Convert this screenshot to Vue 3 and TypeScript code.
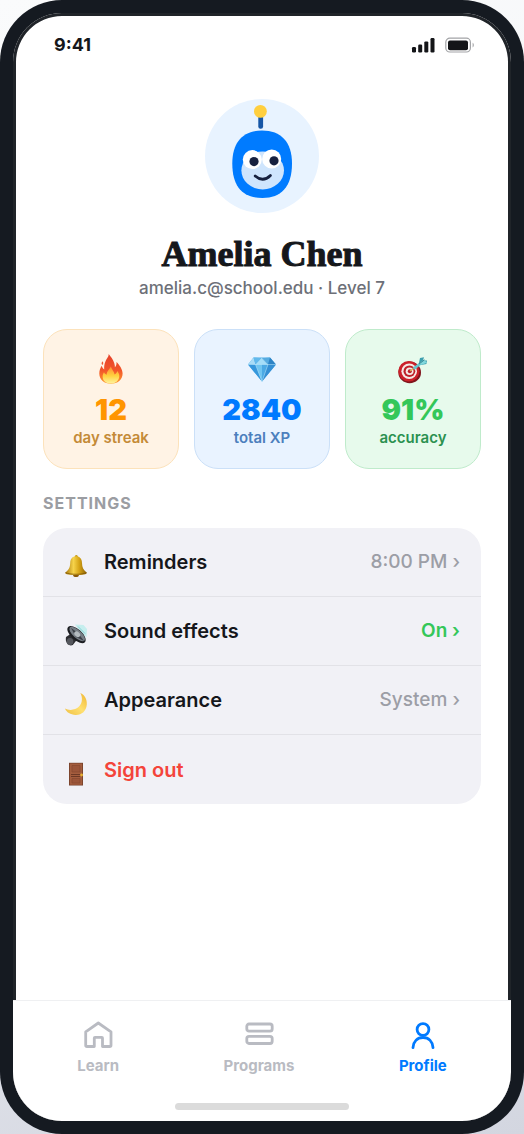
<script setup lang="ts">
import { ref } from 'vue'

interface Stat { id: string; value: string; label: string }
interface Setting { id: string; label: string; value?: string }
interface Tab { id: string; label: string }

const stats: Stat[] = [
  { id: 'streak', value: '12', label: 'day streak' },
  { id: 'xp', value: '2840', label: 'total XP' },
  { id: 'accuracy', value: '91%', label: 'accuracy' },
]

const settings: Setting[] = [
  { id: 'reminders', label: 'Reminders', value: '8:00 PM' },
  { id: 'sound', label: 'Sound effects', value: 'On' },
  { id: 'appearance', label: 'Appearance', value: 'System' },
  { id: 'signout', label: 'Sign out' },
]

const tabs: Tab[] = [
  { id: 'learn', label: 'Learn' },
  { id: 'programs', label: 'Programs' },
  { id: 'profile', label: 'Profile' },
]

const activeTab = ref('profile')
</script>

<template>
  <div class="phone">
    <div class="screen">
      <header class="status">
        <span class="time">9:41</span>
        <svg class="status-icons" viewBox="0 0 64 16" aria-hidden="true">
          <g fill="#141518">
            <rect x="1" y="10" width="4" height="5.4" rx="1.2" />
            <rect x="7.2" y="7.6" width="4" height="7.8" rx="1.2" />
            <rect x="13.3" y="4.4" width="4" height="11" rx="1.2" />
            <rect x="19.5" y="1" width="4" height="14.4" rx="1.2" />
            <rect x="37" y="3.4" width="20" height="9.8" rx="2" />
          </g>
          <rect x="34.8" y="1.2" width="24.6" height="13.8" rx="4" fill="none" stroke="#a3a4a7" stroke-width="1.2" />
          <path d="M61.6 5.8c1.6.6 1.6 4 0 4.6z" fill="#a3a4a7" />
        </svg>
      </header>

      <main class="content">
        <svg class="avatar" viewBox="0 0 114 114" role="img" aria-label="Avatar">
          <circle cx="57" cy="57" r="57" fill="#e8f3ff" />
          <rect x="53.3" y="15" width="4.8" height="14.8" rx="2.2" fill="#1656a6" />
          <circle cx="55.4" cy="12.4" r="6.4" fill="#ffcf3f" />
          <path d="M57 31.6C76 31.6 87 43 87 64.500C87 88 76 99 57.500 99C38 99 27.300 88 27.300 64.500C27.300 43 38 31.600 57 31.600z" fill="#007bff" />
          <ellipse cx="57.700" cy="71.500" rx="21.300" ry="18.900" fill="#cfe5fd" />
          <circle cx="47.300" cy="60.600" r="9.500" fill="#fff" />
          <circle cx="66.700" cy="60" r="9.500" fill="#fff" />
          <circle cx="49" cy="62.600" r="4.600" fill="#17213f" />
          <circle cx="69" cy="61.800" r="4.600" fill="#17213f" />
          <path d="M50.200 77Q58 83.800 65.400 76.400" fill="none" stroke="#17213f" stroke-width="2.800" stroke-linecap="round" />
        </svg>
        <h1>Amelia Chen</h1>
        <p class="account">amelia.c@school.edu · Level 7</p>

        <ul class="stats">
          <li v-for="s in stats" :key="s.id" class="stat" :class="s.id">
            <svg class="stat-icon" viewBox="0 0 30 30" aria-hidden="true">
              <defs>
                <linearGradient id="flame" x1="0" y1="0" x2="0" y2="1">
                  <stop offset="0" stop-color="#e5402a" /><stop offset=".55" stop-color="#f2562a" /><stop offset="1" stop-color="#ff9b2e" />
                </linearGradient>
                <linearGradient id="ember" x1="0" y1="0" x2="0" y2="1">
                  <stop offset="0" stop-color="#ff8a35" /><stop offset=".55" stop-color="#ffd23f" /><stop offset="1" stop-color="#fff3a0" />
                </linearGradient>
              </defs>
              <g v-if="s.id === 'streak'">
                <path d="M12.700 0C14.500 2.500 17.200 5.300 18.300 9.200C18.700 10.700 19 12 18.900 13.300C20.200 12.200 20.700 10.200 20.500 8C23.200 10.800 26.600 15 26.600 19.600C26.600 26 21.500 29.800 15 29.800C8.300 29.800 3.300 25.700 3.300 19.500C3.300 16.500 4.400 14 5.600 11.800C6.300 13.700 7 14.800 8.200 15.500C7.800 9.800 10 6 11.600 3.600C12.300 2.500 12.700 1.500 12.700 0z" fill="url(#flame)" />
                <path d="M6.500 7.200C7.600 8.500 7.500 9.800 6.300 11C5.100 9.800 5.500 8.400 6.500 7.200z" fill="#ee5a34" />
                <path d="M14.800 12.500C15.800 15.500 18 17.300 18.600 20.500C20.200 19.700 21 18.400 21.200 17C22.800 19 23.700 21.200 23.200 23.300C22.300 27.300 19.200 29.600 15 29.600C10.800 29.600 7.200 27.400 6.700 23.400C6.400 21.200 7.200 19.500 8 18.300C8.600 19.600 9.400 20.400 10.700 20.700C10.700 17.200 13.700 15.400 14.800 12.500z" fill="url(#ember)" />
              </g>
              <g v-else-if="s.id === 'xp'">
                <path d="M6.500 3.500H23L29 10.500L15 27.500L1 10.500z" fill="#4faee8" />
                <path d="M6.500 3.500L8.600 10.800L1 10.500z" fill="#a9dcf7" />
                <path d="M6.500 3.500L14.800 4.200L8.600 10.800z" fill="#62b9ec" />
                <path d="M14.800 4.200L20.900 10.800H8.600z" fill="#a5ddf8" />
                <path d="M14.800 4.200L23 3.500L20.900 10.800z" fill="#57abe0" />
                <path d="M23 3.500L29 10.500L20.900 10.800z" fill="#2d83c5" />
                <path d="M1 10.500L8.600 10.800L15 27.500z" fill="#3697dc" />
                <path d="M8.600 10.800H20.900L15 27.500z" fill="#70c5f1" />
                <path d="M15 10.800H20.900L15 27.500z" fill="#4ba9e4" />
                <path d="M20.900 10.800L29 10.500L15 27.500z" fill="#348fd4" />
                <path d="M1 10.500H29M8.600 10.800L15 27.500L20.900 10.800M8.600 10.800L14.800 4.200L20.900 10.800" fill="none" stroke="#c9edfb" stroke-width=".45" />
              </g>
              <g v-else>
                <ellipse cx="11.700" cy="18.400" rx="11.300" ry="10.800" fill="#80151d" />
                <ellipse cx="10.900" cy="17.300" rx="10.600" ry="10.300" fill="#cb2029" />
                <ellipse cx="11.200" cy="17.200" rx="7.800" ry="7.700" fill="#f5e9e5" />
                <ellipse cx="11.400" cy="17.200" rx="5.900" ry="5.800" fill="#bf2028" />
                <ellipse cx="11.600" cy="17.200" rx="3.900" ry="3.800" fill="#f5e9e5" />
                <circle cx="11.800" cy="17.200" r="2" fill="#bd1e27" />
                <path d="M12 17L15.500 14.500" stroke="#d9b45b" stroke-width="1.300" />
                <path d="M14.600 13.700L22 8.200L24 10L16.600 15.800z" fill="#67c5ce" />
                <path d="M20.800 9.400L22 4L26 3.200L25 6.600L29 6.400L28.400 10L23 11z" fill="#3d9fae" />
                <path d="M21 9.500L26 5.600L29 8.700L23 10.900z" fill="#80d7dc" />
                <path d="M21 10L26.500 5.800" stroke="#2a7482" stroke-width=".8" />
              </g>
            </svg>
            <strong>{{ s.value }}</strong>
            <span>{{ s.label }}</span>
          </li>
        </ul>

        <h2>SETTINGS</h2>
        <div class="settings">
          <button v-for="s in settings" :key="s.id" type="button" class="row" :class="s.id">
            <svg class="row-icon" viewBox="0 0 24 24" aria-hidden="true">
              <defs>
                <linearGradient id="brass">
                  <stop offset="0" stop-color="#a87709" /><stop offset=".38" stop-color="#f6d34b" /><stop offset=".65" stop-color="#d6a416" /><stop offset="1" stop-color="#8d6206" />
                </linearGradient>
                <linearGradient id="moonlight" x1="0" y1="1" x2="1" y2="0">
                  <stop offset="0" stop-color="#efc044" /><stop offset=".5" stop-color="#ffe071" /><stop offset="1" stop-color="#efb52f" />
                </linearGradient>
              </defs>
              <g v-if="s.id === 'reminders'">
                <circle cx="12.300" cy="2.600" r="1.500" fill="#c5940f" />
                <ellipse cx="12" cy="21" rx="2.900" ry="2.100" fill="#8b5a0a" />
                <path d="M12.200 2.300C16.200 2.400 17.900 5.200 18 9C18.100 13.500 19.400 16 22.600 18.500C23.400 20.400 18 21 12 21C6 21 .6 20.400 1.400 18.500C4.800 15.800 6 13.500 6.200 9C6.400 5 8.200 2.400 12.200 2.300z" fill="url(#brass)" />
                <path d="M1.500 18.700C6 20.800 18 20.800 22.500 18.700" fill="none" stroke="#805707" stroke-width=".8" />
              </g>
              <g v-else-if="s.id === 'sound'">
                <path d="M11 1.500L19.500 2L23 6L22.500 14L18 11z" fill="#c6eeee" />
                <path d="M14 3.500L21 10.500" stroke="#85cfd3" stroke-width="1" />
                <path d="M2 14L8 10L13.500 16L8.800 22C5 23.600.8 20 2 14z" fill="#2c2d31" />
                <ellipse cx="6" cy="18.500" rx="3.300" ry="3.600" fill="#55575d" />
                <ellipse cx="12.500" cy="11.600" rx="11.300" ry="5.400" transform="rotate(42 12.500 11.600)" fill="#1c1e22" />
                <ellipse cx="13.200" cy="11" rx="9.900" ry="4" transform="rotate(42 13.200 11)" fill="#777e86" />
                <path d="M7 5L14 10L20 18L12 14z" fill="#3c4148" />
                <ellipse cx="13.200" cy="11.300" rx="3.300" ry="2.400" transform="rotate(42 13.200 11.300)" fill="#b3babf" />
              </g>
              <path v-else-if="s.id === 'appearance'" d="M16.300 1C20.600 3 23.200 7 22.800 12.500C22.400 19 17.600 23.200 11.600 23C6.500 22.800 2.400 20.500 1 16.600C5.200 18.800 11.500 18.300 15 14.600C18.700 10.800 18.600 5 16.300 1z" fill="url(#moonlight)" />
              <g v-else>
                <rect x="5" y=".8" width="14" height="22.700" fill="#74402a" />
                <rect x="5.800" y="1.500" width="12.400" height="21.300" fill="#a45d3e" />
                <path d="M8 3.500H16V10H8zM8 16.500H16V21H8z" fill="#9b5539" stroke="#86492f" stroke-width=".7" />
                <path d="M7 12.500H16M7 14.500H16" stroke="#673623" stroke-width=".9" />
                <circle cx="17.600" cy="13" r="1.400" fill="#e7b330" />
              </g>
            </svg>
            <span class="row-label">{{ s.label }}</span>
            <span v-if="s.value" class="row-value">{{ s.value }} ›</span>
          </button>
        </div>
      </main>

      <footer class="tabbar">
        <nav class="tabs" aria-label="Main">
          <a v-for="t in tabs" :key="t.id" :href="'#' + t.id" class="tab" :class="{ active: activeTab === t.id }" @click="activeTab = t.id">
            <svg viewBox="0 0 32 32" fill="none" stroke="currentColor" stroke-width="2.800" stroke-linecap="round" stroke-linejoin="round" aria-hidden="true">
              <path v-if="t.id === 'learn'" d="M16.300 4L29 12.800V26.200Q29 27.500 27.700 27.500H20.500V19Q20.500 18.300 19.800 18.300H13Q12.300 18.300 12.300 19V27.500H5Q3.700 27.500 3.700 26.200V12.800z" />
              <template v-else-if="t.id === 'programs'">
                <rect x="3.800" y="5" width="25.400" height="7.200" rx="2.200" />
                <rect x="3.800" y="17.300" width="25.400" height="7.200" rx="2.200" />
              </template>
              <template v-else>
                <circle cx="16" cy="10.500" r="5.900" />
                <path d="M6 28.700V28.500C6.500 22.300 10.400 18.500 16 18.500C21.600 18.500 25.500 22.300 26 28.500V28.700" />
              </template>
            </svg>
            <span>{{ t.label }}</span>
          </a>
        </nav>
        <div class="home-indicator"></div>
      </footer>
    </div>
  </div>
</template>

<style>
body {
  margin: 0;
  background: linear-gradient(165deg, #fafbfc 0%, #f1f2f5 50%, #d3d6e0 100%);
}
</style>

<style scoped>
.phone {
  box-sizing: border-box;
  min-height: 100vh;
  padding: 13px;
  display: flex;
  border-radius: 62px;
  background: #151a21;
  font-family: Inter, "Liberation Sans", sans-serif;
  color: #15171b;
}
.screen {
  flex: 1;
  min-width: 0;
  display: flex;
  flex-direction: column;
  overflow: hidden;
  border-radius: 49px;
  background: #fff;
  box-shadow: inset 0 0 0 3px #202429;
}
.status {
  display: flex;
  align-items: center;
  justify-content: space-between;
  padding: 20px 36px 0 41px;
}
.time {
  font-size: 18px;
  line-height: 24px;
  font-weight: 700;
}
.status-icons {
  width: 64px;
  height: 16px;
}
.content {
  flex: 1;
  display: flex;
  flex-direction: column;
  padding: 42px 30px 24px;
}
.avatar {
  width: 114px;
  height: 114px;
  align-self: center;
}
h1 {
  margin: 19px 0 0;
  font-family: "Liberation Serif", serif;
  font-size: 36px;
  line-height: 44px;
  font-weight: 700;
  text-align: center;
  -webkit-text-stroke: 1px currentColor;
}
.account {
  margin: 0;
  font-size: 17px;
  line-height: 24px;
  text-align: center;
  font-weight: 500;
  color: #6d7078;
}
.stats {
  list-style: none;
  margin: 29px 0 0;
  padding: 0;
  display: grid;
  grid-template-columns: repeat(3, 1fr);
  gap: 15px;
}
.stat {
  display: flex;
  flex-direction: column;
  align-items: center;
  padding: 24px 8px 20px;
  border: 1px solid;
  border-radius: 24px;
}
.stat-icon {
  width: 30px;
  height: 30px;
  margin-bottom: 8px;
}
.stat strong {
  font-size: 29px;
  line-height: 36px;
  font-weight: 900;
}
.stat span {
  font-size: 15px;
  line-height: 20px;
  font-weight: 600;
}
.streak { background: #fff3e5; border-color: #fce2bb; color: #ff9500; }
.streak span { color: #c48a37; }
.xp { background: #e9f3ff; border-color: #cbe0f8; color: #007aff; }
.xp span { color: #4c7fbd; }
.accuracy { background: #e7faec; border-color: #bfebcb; color: #34c759; }
.accuracy span { color: #2b9150; }
h2 {
  margin: 24px 0 14px;
  font-size: 16px;
  line-height: 21px;
  font-weight: 700;
  letter-spacing: 1px;
  color: #9b9da2;
}
.settings {
  overflow: hidden;
  border-radius: 24px;
  background: #f1f1f6;
}
.row {
  box-sizing: border-box;
  width: 100%;
  min-height: 69px;
  display: flex;
  align-items: center;
  gap: 16px;
  padding: 0 21px;
  border: 0;
  border-bottom: 1px solid #e2e2e7;
  background: none;
  font: inherit;
  font-size: 20px;
  line-height: 26px;
  color: inherit;
  text-align: left;
}
.row:last-child {
  border-bottom: 0;
}
.row-icon {
  width: 24px;
  height: 24px;
  margin-top: 8px;
}
.row-label {
  flex: 1;
  font-weight: 600;
}
.row-value {
  font-size: 19px;
  font-weight: 500;
  color: #9c9ea6;
}
.sound .row-value {
  font-weight: 600;
  color: #34c759;
}
.signout .row-label {
  color: #f4443a;
}
.tabbar {
  border-top: 1px solid #eff0f2;
  background: #fff;
}
.tabs {
  display: flex;
  justify-content: space-around;
  padding: 18px 12px 27px;
}
.tab {
  display: flex;
  flex-direction: column;
  align-items: center;
  gap: 5px;
  padding: 0 11px;
  color: #b9bbc2;
  text-decoration: none;
  font-size: 15px;
  line-height: 20px;
  font-weight: 700;
}
.tab svg {
  width: 32px;
  height: 32px;
}
.tab.active {
  color: #007aff;
}
.home-indicator {
  width: 35%;
  height: 7px;
  margin: 0 auto 11px;
  border-radius: 4px;
  background: #dbdbdb;
}
</style>
